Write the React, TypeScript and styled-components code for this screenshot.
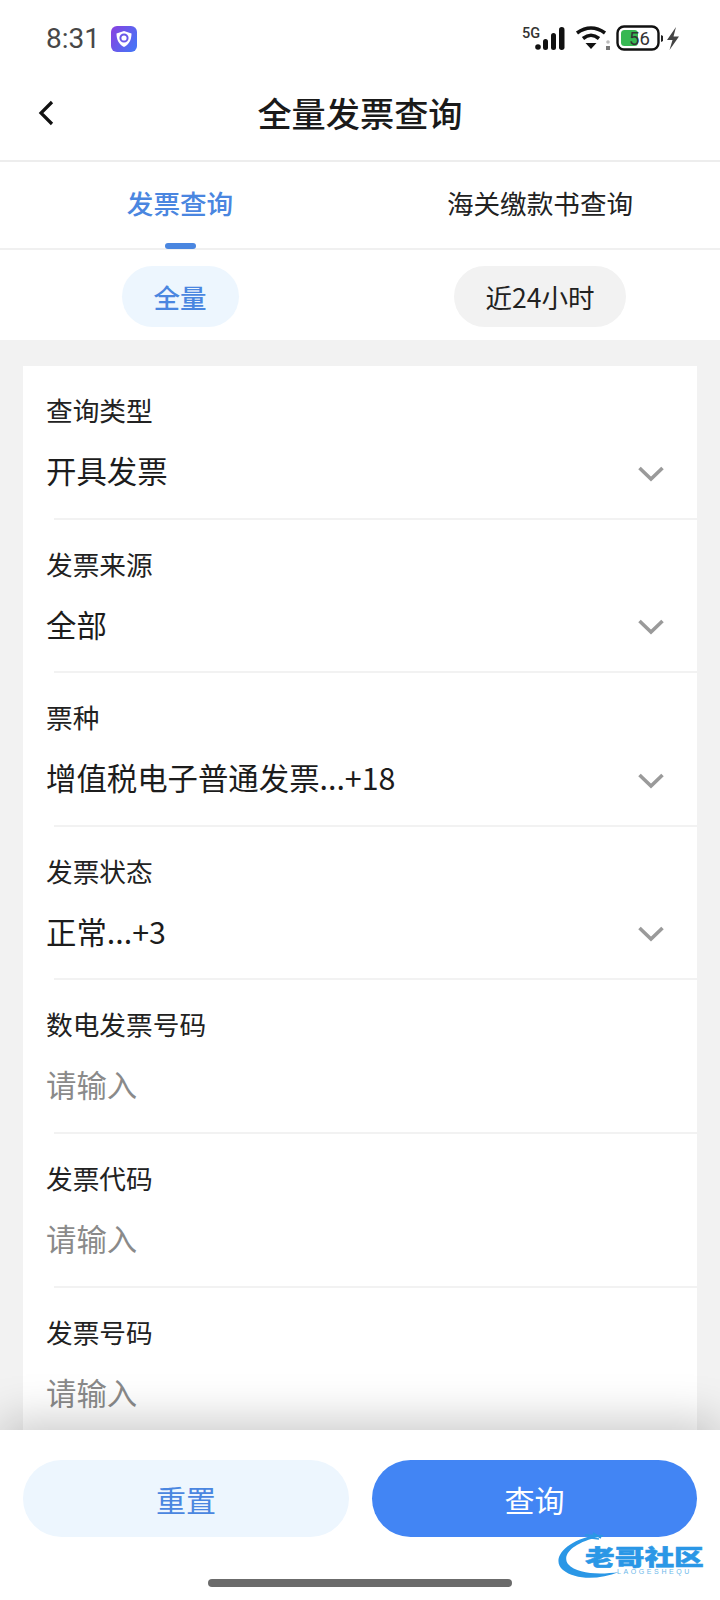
import React from "react";
import styled, { createGlobalStyle } from "styled-components";

const Global = createGlobalStyle`
  html, body { margin: 0; padding: 0; background: #fff; }
  * { box-sizing: border-box; }
  body { font-family: "Noto Sans CJK SC", "Noto Sans", sans-serif; }
`;

const Page = styled.div`
  width: 720px; height: 1600px; display: flex; flex-direction: column;
  overflow: hidden; position: relative; background: #fff; color: #1c1c1c;
`;
const StatusBar = styled.div`
  height: 80px; flex: none; display: flex; align-items: center; padding: 0 38px 2px 46px;
`;
const Clock = styled.span`
  font: 400 28px/1 Roboto, sans-serif; color: #474747;
`;
const AppBadge = styled.svg`
  width: 26px; height: 26px; margin: -1px 0 0 11px;
`;
const StatusIcons = styled.div`
  margin-left: auto; display: flex; align-items: center;
`;
const Header = styled.header`
  height: 82px; flex: none; display: flex; align-items: center; justify-content: center;
  position: relative; border-bottom: 2px solid #ededed; padding-bottom: 15px;
`;
const BackIcon = styled.svg`
  position: absolute; left: 36px; top: 18px; width: 20px; height: 30px;
`;
const Title = styled.h1`
  margin: 0; font-size: 34.2px; font-weight: 500; line-height: 1; color: #1a1a1a;
`;
const Tabs = styled.nav`
  height: 88px; flex: none; display: grid; grid-template-columns: 360px 360px;
  border-bottom: 2px solid #f0f0f0;
`;
const Tab = styled.div<{ $active?: boolean }>`
  position: relative; display: flex; justify-content: center; padding-top: 23px;
  font-size: 26.6px; line-height: 36px;
  font-weight: ${(p) => (p.$active ? 500 : 400)};
  color: ${(p) => (p.$active ? "#4a86e0" : "#222")};
`;
const TabMark = styled.i`
  position: absolute; left: 165px; bottom: -1px; width: 31px; height: 6px; border-radius: 3px;
  background: #4a86e0;
`;
const Pills = styled.div`
  height: 90px; flex: none; display: grid; grid-template-columns: 360px 360px;
  padding-top: 16px;
`;
const PillCell = styled.div`
  display: flex; justify-content: center;
`;
const Pill = styled.div<{ $active?: boolean }>`
  height: 61px; border-radius: 31px; display: flex; align-items: center; padding: 0 32px;
  font-size: 26.5px; font-weight: ${(p) => (p.$active ? 500 : 400)};
  color: ${(p) => (p.$active ? "#4a86e0" : "#222")};
  background: ${(p) => (p.$active ? "#edf6fe" : "#f2f2f2")};
`;
const Scroll = styled.main`
  flex: 1; min-height: 0; overflow: hidden; background: #f2f2f2; padding: 26px 23px 0;
`;
const Card = styled.section`
  background: #fff; width: 674px;
`;
const Field = styled.div`
  height: 151.6px; padding: 26px 32px 0 24px;
  display: flex; flex-direction: column;
`;
const Label = styled.div`
  font-size: 26.7px; line-height: 36px; color: #222; margin-left: -1px;
`;
const ValueRow = styled.div`
  margin-top: 24px; display: flex; align-items: center; justify-content: space-between;
  height: 36px;
`;
const Value = styled.div<{ $placeholder?: boolean }>`
  font-size: 30.4px; line-height: 36px; margin-left: -1px;
  color: ${(p) => (p.$placeholder ? "#8a8a8a" : "#1c1c1c")};
`;
const Chevron = styled.svg`
  width: 28px; height: 18px; flex: none; margin-top: 7px;
`;
const Divider = styled.hr`
  margin: 0 0 0 31px; border: 0; height: 2px; background: #f2f2f2;
`;
const Footer = styled.footer`
  height: 170px; flex: none; position: relative; z-index: 2; background: #fff;
  box-shadow: 0 -8px 44px rgba(0,0,0,.22);
  padding: 30px 23px 0; display: flex; flex-direction: column;
`;
const Buttons = styled.div`
  display: grid; grid-template-columns: 326px 325px; column-gap: 23px;
`;
const Btn = styled.div<{ $primary?: boolean }>`
  height: 77px; border-radius: 39px; display: flex; align-items: center; justify-content: center;
  font-size: 30px;
  background: ${(p) => (p.$primary ? "#4285f4" : "#edf6fe")};
  color: ${(p) => (p.$primary ? "#fff" : "#4a86e0")};
`;
const HomeBar = styled.div`
  width: 304px; height: 8px; border-radius: 4px; background: #6b6b6b; margin: 42px auto 0 185px;
`;
const Watermark = styled.div`
  position: absolute; left: 555px; top: 100px; width: 155px; height: 50px;
`;
const WmSwoosh = styled.svg`
  position: absolute; left: 0; top: 0; width: 80px; height: 50px;
`;
const WmTitle = styled.div`
  position: absolute; left: 30px; top: 14px; font-size: 22px; line-height: 22px; font-weight: 900;
  color: #2a97e6; white-space: nowrap; transform: scaleX(1.35); transform-origin: left center;
  -webkit-text-stroke: .5px #2a97e6;
`;
const WmSub = styled.div`
  position: absolute; left: 62px; top: 37px; font: 400 7px/9px "Liberation Sans", sans-serif;
  color: #6db8ea; letter-spacing: 2.6px; white-space: nowrap;
`;

const Down = () => (
  <Chevron viewBox="0 0 28 18" fill="none">
    <path d="M2.5 3 L14 14 L25.5 3" stroke="#9a9a9a" strokeWidth="3.6" />
  </Chevron>
);

const fields: { label: string; value: string; select?: boolean }[] = [
  { label: "查询类型", value: "开具发票", select: true },
  { label: "发票来源", value: "全部", select: true },
  { label: "票种", value: "增值税电子普通发票...+18", select: true },
  { label: "发票状态", value: "正常...+3", select: true },
  { label: "数电发票号码", value: "请输入" },
  { label: "发票代码", value: "请输入" },
  { label: "发票号码", value: "请输入" },
];

export default function App() {
  return (
    <Page>
      <Global />
      <StatusBar>
        <Clock>8:31</Clock>
        <AppBadge viewBox="0 0 26 26">
          <defs>
            <linearGradient id="badge" x1="0" y1="0" x2="1" y2="0.6">
              <stop offset="0" stopColor="#8a3fe0" />
              <stop offset="1" stopColor="#4a72f5" />
            </linearGradient>
          </defs>
          <rect width="26" height="26" rx="6" fill="url(#badge)" />
          <path d="M13 5 L20.5 7.5 C20.5 14 18 18.5 13 21 C8 18.5 5.5 14 5.5 7.5 Z" fill="#fff" />
          <circle cx="13" cy="12" r="3.6" fill="none" stroke="#6a58e8" strokeWidth="2" />
        </AppBadge>
        <StatusIcons>
          <svg width="162" height="30" viewBox="-4 0 162 30">
            <text x="-2" y="14" fontFamily="Roboto, sans-serif" fontSize="14.5" fontWeight="500" fill="#333">5G</text>
            <circle cx="14" cy="23" r="2.8" fill="#111" />
            <rect x="19" y="15" width="5" height="11" rx="2.5" fill="#111" />
            <rect x="27" y="9" width="5" height="17" rx="2.5" fill="#111" />
            <rect x="35" y="3" width="5.5" height="23" rx="2.7" fill="#111" />
            <path d="M53 9 Q67 -1 81 9" stroke="#111" strokeWidth="3.6" fill="none" />
            <path d="M59 14.5 Q67 8 75 14.5" stroke="#111" strokeWidth="3.6" fill="none" />
            <path d="M61.5 19 L72.5 19 L67 25 Z" fill="#111" />
            <circle cx="84" cy="18" r="1.8" fill="#bbb" />
            <rect x="82" y="22" width="4" height="4" fill="#777" />
            <rect x="93.5" y="2.5" width="41" height="23" rx="6.5" fill="#fff" stroke="#111" strokeWidth="2.4" />
            <rect x="97" y="6" width="17" height="16" rx="3.5" fill="#37b853" />
            <text x="105" y="21" fontFamily="Roboto, sans-serif" fontSize="18.5" fill="#333">56</text>
            <path d="M137 11 L139 12 L139 17 L137 18 Z" fill="#222" />
            <path d="M152 3 L143 16 L148.5 16 L145.5 26 L155 12.5 L149.5 12.5 Z" fill="#444" />
          </svg>
        </StatusIcons>
      </StatusBar>
      <Header>
        <BackIcon viewBox="0 0 20 30" fill="none">
          <path d="M16 4 L5 15 L16 26" stroke="#111" strokeWidth="3.2" />
        </BackIcon>
        <Title>全量发票查询</Title>
      </Header>
      <Tabs>
        <Tab $active>
          发票查询
          <TabMark />
        </Tab>
        <Tab>海关缴款书查询</Tab>
      </Tabs>
      <Pills>
        <PillCell>
          <Pill $active>全量</Pill>
        </PillCell>
        <PillCell>
          <Pill>近24小时</Pill>
        </PillCell>
      </Pills>
      <Scroll>
        <Card>
          {fields.map((f, i) => (
            <React.Fragment key={f.label}>
              <Field>
                <Label>{f.label}</Label>
                <ValueRow>
                  <Value $placeholder={!f.select}>{f.value}</Value>
                  {f.select && <Down />}
                </ValueRow>
              </Field>
              {i < fields.length - 1 && <Divider />}
            </React.Fragment>
          ))}
        </Card>
      </Scroll>
      <Footer>
        <Buttons>
          <Btn>重置</Btn>
          <Btn $primary>查询</Btn>
        </Buttons>
        <HomeBar />
        <Watermark>
          <WmSwoosh viewBox="0 0 80 50" fill="none">
            <path d="M44 5 C14 8 -6 28 8 40 C20 50 44 50 64 42 C44 45 22 44 13 34 C6 24 20 12 44 7 Z" fill="#2a97e6" />
            <path d="M30 5 L48 6 M38 3 L46 8 M36 8 L44 9" stroke="#2a97e6" strokeWidth="1.6" />
          </WmSwoosh>
          <WmTitle>老哥社区</WmTitle>
          <WmSub>LAOGESHEQU</WmSub>
        </Watermark>
      </Footer>
    </Page>
  );
}
